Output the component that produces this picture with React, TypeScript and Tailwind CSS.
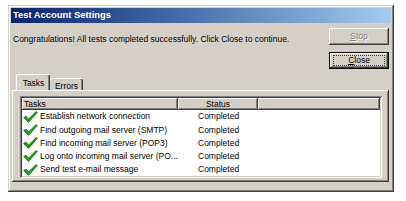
import React from 'react'

const tasks = [
  'Establish network connection',
  'Find outgoing mail server (SMTP)',
  'Find incoming mail server (POP3)',
  'Log onto incoming mail server (PO...',
  'Send test e-mail message',
]

function Check() {
  return (
    <svg width="15" height="12" viewBox="0 0 15 12" className="shrink-0">
      <path
        d="M0.5 6.5 L3 5 L5.5 8 L13 0.5 L14.5 1.5 L5.5 11.5 Z"
        fill="#1e9c1e"
        stroke="#0c5a0c"
        strokeWidth="0.6"
        strokeLinejoin="round"
      />
    </svg>
  )
}

const raised =
  'shadow-[inset_-1px_-1px_#404040,inset_1px_1px_#ffffff,inset_-2px_-2px_#808080]'

export default function App() {
  return (
    <div className="bg-white pl-2 pt-[5px] pb-2 font-['Liberation_Sans',Arial,sans-serif] text-[8.5px] text-black">
      <div className="flex h-[187px] w-[386px] flex-col bg-[#d4d0c8] p-[3px] shadow-[inset_-1px_-1px_#404040,inset_1px_1px_#d4d0c8,inset_-2px_-2px_#808080,inset_2px_2px_#ffffff]">
        <div className="flex h-[15px] items-center bg-gradient-to-r from-[#0a246a] to-[#a6caf0] pl-[2px] text-[9.4px] font-bold text-white">
          Test Account Settings
        </div>

        <div className="flex pl-[2px] pr-[2px] pt-[5px]">
          <div className="flex-1 pt-[5px]">
            Congratulations! All tests completed successfully. Click Close to continue.
          </div>
          <div className="flex flex-col gap-[7px]">
            <div
              className={`flex h-[17px] w-[60px] items-center justify-center bg-[#d4d0c8] leading-none text-[#808080] [text-shadow:1px_1px_#ffffff] ${raised}`}
            >
              <span>
                <span className="underline">S</span>top
              </span>
            </div>
            <div className="flex h-[17px] w-[60px] border border-black bg-[#d4d0c8]">
              <div className={`flex flex-1 px-[3px] py-[2px] ${raised}`}>
                <div className="flex flex-1 items-center justify-center border border-dotted border-[#404040] leading-none">
                  <span>
                    <span className="underline">C</span>lose
                  </span>
                </div>
              </div>
            </div>
          </div>
        </div>

        <div className="mt-[6px] ml-[1px] mr-[2px] flex flex-col">
          <div className="relative z-10 flex h-[15px] items-end pl-[4px]">
            <div className="flex h-[16px] w-[34px] items-start justify-center rounded-t-[2px] border-l border-t border-white bg-[#d4d0c8] pt-[2px] shadow-[inset_-1px_0_#404040,inset_-2px_0_#808080]">
              Tasks
            </div>
            <div className="flex h-[12px] w-[33px] items-start justify-center rounded-t-[2px] border-t border-white bg-[#d4d0c8] pt-[1px] shadow-[inset_-1px_0_#404040,inset_-2px_0_#808080]">
              Errors
            </div>
          </div>
          <div className="flex h-[92px] flex-col bg-[#d4d0c8] pb-[5px] pl-[8px] pr-[7px] pt-[6px] shadow-[inset_-1px_-1px_#404040,inset_1px_1px_#ffffff,inset_-2px_-2px_#808080]">
            <div className="flex flex-1 flex-col bg-white p-[2px] shadow-[inset_1px_1px_#808080,inset_-1px_-1px_#ffffff,inset_2px_2px_#404040,inset_-2px_-2px_#d4d0c8]">
              <div className="flex h-[12px]">
                <div className={`flex w-[156px] items-center bg-[#d4d0c8] pl-[2px] ${raised}`}>
                  Tasks
                </div>
                <div className={`flex w-[80px] items-center justify-center bg-[#d4d0c8] ${raised}`}>
                  Status
                </div>
                <div className={`flex-1 bg-[#d4d0c8] ${raised}`} />
              </div>
              {tasks.map((t) => (
                <div key={t} className="flex h-[13.25px] items-center">
                  <div className="flex w-[156px] items-center gap-[2px] pl-[1px]">
                    <Check />
                    <span className="whitespace-nowrap">{t}</span>
                  </div>
                  <div className="w-[80px] pl-[20px]">Completed</div>
                </div>
              ))}
            </div>
          </div>
        </div>
      </div>
    </div>
  )
}
